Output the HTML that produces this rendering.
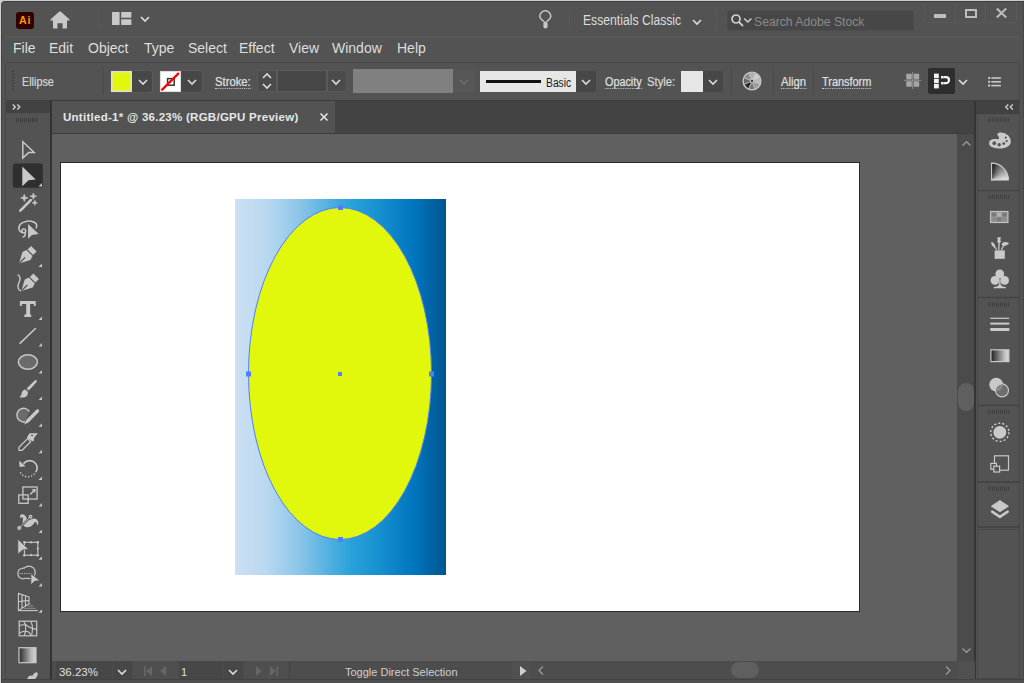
<!DOCTYPE html>
<html><head><meta charset="utf-8">
<style>
html,body{margin:0;padding:0;}
body{width:1024px;height:683px;overflow:hidden;position:relative;background:#cfd1d3;font-family:"Liberation Sans",sans-serif;}
.a{position:absolute;}
#win{position:absolute;left:1px;top:1px;width:1023px;height:682px;background:#535353;border-top:1px solid #3e3e3e;border-left:1px solid #444;border-top-left-radius:4px;box-sizing:border-box;}
.t{position:absolute;white-space:nowrap;color:#dedede;transform-origin:0 0;line-height:1;}
.m{font-size:14px;top:40.6px;color:#dedede;}
.c{font-size:12px;top:77px;line-height:11px;color:#e0e0e0;transform:scaleX(.94);-webkit-text-stroke:0.2px #e0e0e0;}
.u{border-bottom:1px dotted #d0d0d0;padding-bottom:0;line-height:11px;height:11px;}
.vs{position:absolute;width:1px;background:#4a4a4a;}
svg{position:absolute;overflow:visible;}
.dd{position:absolute;background:#474747;border-radius:2px;}
.chev{fill:none;stroke:#dcdcdc;stroke-width:1.6;}
.ic{fill:#c8c8c8;}
.ics{fill:none;stroke:#c8c8c8;stroke-width:1.5;}
.tri{position:absolute;width:0;height:0;border-left:4px solid transparent;border-bottom:4px solid #c8c8c8;}
</style></head>
<body>
<div class="a" style="left:0;top:0;width:1024px;height:1px;background:#c9ccd0"></div>
<div id="win"></div>

<!-- ===== TITLE BAR ===== -->
<div class="a" style="left:16px;top:11.5px;width:17.5px;height:17px;background:#330000;border-radius:3px;"></div>
<div class="t" style="left:19px;top:14.5px;font-size:10.5px;font-weight:700;color:#ff9a00;letter-spacing:0.9px;">Ai</div>
<svg style="left:49.5px;top:11px" width="20" height="18" viewBox="0 0 20 18"><path class="ic" d="M10 0.3 C10.3 0.3 10.6 0.5 10.9 0.8 L19.3 8.2 C19.9 8.8 19.6 9.6 18.8 9.6 L17 9.6 L17 17.6 L12.6 17.6 L12.6 12.2 L7.4 12.2 L7.4 17.6 L3 17.6 L3 9.6 L1.2 9.6 C0.4 9.6 0.1 8.8 0.7 8.2 L9.1 0.8 C9.4 0.5 9.7 0.3 10 0.3 Z"/></svg>
<div class="vs" style="left:98px;top:9px;height:21px;background:#5a5a5a"></div>
<svg style="left:112px;top:11.5px" width="20" height="13" viewBox="0 0 20 13"><rect class="ic" x="0" y="0" width="7.6" height="13" rx="0.6"/><rect class="ic" x="9.2" y="0" width="10.2" height="5.8" rx="0.6"/><rect class="ic" x="9.2" y="7.2" width="10.2" height="5.8" rx="0.6"/></svg>
<svg style="left:140px;top:16px" width="10" height="6" viewBox="0 0 10 6"><path class="chev" d="M1 1 L5 5 L9 1"/></svg>

<svg style="left:538px;top:10px" width="15" height="19" viewBox="0 0 15 19"><path d="M7.3 12.9 C5.5 11 1.8 9.2 1.8 6.3 A5.5 5.5 0 0 1 12.8 6.3 C12.8 9.2 9.1 11 7.3 12.9 Z" fill="none" stroke="#c8c8c8" stroke-width="1.5" stroke-linejoin="round"/><path d="M5.4 13 H9.6 V16.6 C9.6 17.8 8.6 18.5 7.5 18.5 C6.4 18.5 5.4 17.8 5.4 16.6 Z" fill="#c8c8c8"/></svg>
<div class="vs" style="left:569px;top:9px;height:22px;background:#5a5a5a"></div>
<div class="t" style="left:583px;top:13px;font-size:14px;color:#dcdcdc;transform:scaleX(.87)">Essentials Classic</div>
<svg style="left:692px;top:19px" width="10" height="6" viewBox="0 0 10 6"><path class="chev" d="M1 1 L5 5 L9 1"/></svg>
<div class="vs" style="left:716px;top:9px;height:22px;background:#5a5a5a"></div>
<div class="a" style="left:727px;top:10px;width:187px;height:21px;background:#474747;border:1px solid #4c4c4c;border-radius:3px;box-sizing:border-box"></div>
<svg style="left:731px;top:14px" width="26" height="13" viewBox="0 0 26 13"><circle cx="5" cy="5" r="4" fill="none" stroke="#cfcfcf" stroke-width="1.7"/><path d="M7.8 7.8 L12 12" stroke="#cfcfcf" stroke-width="1.8"/><path class="chev" d="M13.2 4.5 L16.8 8 L20.4 4.5" style="stroke:#cfcfcf"/></svg>
<div class="t" style="left:754px;top:15.6px;font-size:12.5px;color:#8a8a8a;transform:scaleX(.975)">Search Adobe Stock</div>
<div class="a" style="left:924px;top:2px;width:93px;height:21px;border:1px solid #5a5a5a;border-top:none;border-radius:0 0 3px 3px;box-sizing:border-box"></div>
<div class="vs" style="left:955px;top:2px;height:20px;background:#5a5a5a"></div>
<div class="vs" style="left:985px;top:2px;height:20px;background:#5a5a5a"></div>
<div class="a" style="left:934px;top:14px;width:12px;height:4px;background:#bdbdbd"></div>
<div class="a" style="left:965px;top:9px;width:12px;height:9px;border:2px solid #bdbdbd;box-sizing:border-box"></div>
<svg style="left:996px;top:8px" width="11" height="10" viewBox="0 0 11 10"><path d="M0.8 0.5 L10.2 9.5 M10.2 0.5 L0.8 9.5" stroke="#bdbdbd" stroke-width="2"/></svg>

<div class="a" style="left:5px;top:36px;width:1015px;height:2px;background:#585858;border-radius:1px"></div>

<!-- ===== MENU ===== -->
<div class="t m" style="left:13px">File</div>
<div class="t m" style="left:49px">Edit</div>
<div class="t m" style="left:88px">Object</div>
<div class="t m" style="left:144px">Type</div>
<div class="t m" style="left:188px">Select</div>
<div class="t m" style="left:239px">Effect</div>
<div class="t m" style="left:289px">View</div>
<div class="t m" style="left:332px">Window</div>
<div class="t m" style="left:397px">Help</div>

<!-- ===== CONTROL BAR ===== -->
<div class="a" style="left:5px;top:62px;width:1015px;height:39px;border:1px solid #474747;border-radius:3px;box-sizing:border-box"></div>

<!-- control bar contents -->
<div class="a" style="left:12px;top:71px;width:2px;height:21px;background:repeating-linear-gradient(to bottom,#3a3a3a 0 1px,transparent 1px 3px)"></div>
<div class="t c" style="left:22px;top:77px;color:#d0d0d0;transform:scaleX(.9)">Ellipse</div>
<div class="vs" style="left:103px;top:67px;height:28px;background:#4a4a4a"></div>
<div class="a" style="left:110px;top:70px;width:43px;height:23px;background:#5a5a5a;border-radius:3px"></div>
<div class="dd" style="left:111px;top:71px;width:41px;height:21px;"></div>
<div class="a" style="left:111px;top:71px;width:21px;height:21px;background:#e1f80c;border:1px solid #dedede;box-shadow:inset 0 0 0 1px rgba(222,222,222,0.55);box-sizing:border-box"></div>
<svg style="left:138px;top:78.5px" width="10" height="6" viewBox="0 0 10 6"><path class="chev" d="M1 1 L5 5 L9 1"/></svg>
<div class="a" style="left:159px;top:70px;width:44px;height:23px;background:#5a5a5a;border-radius:3px"></div>
<div class="dd" style="left:160px;top:71px;width:42px;height:21px;"></div>
<div class="a" style="left:160px;top:71px;width:21px;height:21px;background:#fff;border:1px solid #dcdcdc;box-sizing:border-box"></div>
<svg style="left:160px;top:71px" width="21" height="21" viewBox="0 0 21 21"><rect x="7.6" y="7.6" width="6.6" height="6.6" fill="none" stroke="#383838" stroke-width="1.5"/></svg>
<svg style="left:160px;top:71px" width="21" height="21" viewBox="0 0 21 21"><path d="M2.2 18.6 L18.3 2.6" stroke="#f00" stroke-width="2.3" stroke-linecap="round"/></svg>
<svg style="left:187px;top:79px" width="10" height="6" viewBox="0 0 10 6"><path class="chev" d="M1 1 L5 5 L9 1"/></svg>
<div class="t c u" style="left:215px;top:77px">Stroke:</div>
<div class="a" style="left:257px;top:70px;width:90px;height:22px;background:#5a5a5a;border-radius:3px;"></div>
<div class="a" style="left:258px;top:71px;width:18px;height:20px;background:#4b4b4b;border-radius:2px 0 0 2px"></div>
<svg style="left:262px;top:73px" width="10" height="16" viewBox="0 0 10 16"><path class="chev" d="M1 5 L5 1 L9 5 M1 11 L5 15 L9 11"/></svg>
<div class="a" style="left:278px;top:71px;width:48px;height:20px;background:#474747"></div>
<div class="a" style="left:328px;top:71px;width:18px;height:20px;background:#4b4b4b;border-radius:0 2px 2px 0"></div>
<svg style="left:331px;top:79px" width="10" height="6" viewBox="0 0 10 6"><path class="chev" d="M1 1 L5 5 L9 1"/></svg>
<div class="a" style="left:353px;top:69px;width:100px;height:24px;background:#808080"></div>
<div class="a" style="left:453px;top:69px;width:22px;height:24px;background:#575757"></div>
<svg style="left:459px;top:79px" width="10" height="6" viewBox="0 0 10 6"><path class="chev" d="M1 1 L5 5 L9 1" style="stroke:#6c6c6c"/></svg>
<div class="dd" style="left:480px;top:71px;width:116px;height:21px;"></div>
<div class="a" style="left:480px;top:71px;width:96px;height:21px;background:#e6e6e6"></div>
<div class="a" style="left:486px;top:80px;width:55px;height:3px;background:#111"></div>
<div class="t" style="left:546px;top:77px;font-size:12px;color:#1a1a1a;transform:scaleX(.86)">Basic</div>
<svg style="left:581px;top:79px" width="10" height="6" viewBox="0 0 10 6"><path class="chev" d="M1 1 L5 5 L9 1"/></svg>
<div class="t c u" style="left:605px;top:77px;transform:scaleX(.9)">Opacity</div>
<div class="t c" style="left:647px;top:77px;color:#cfcfcf">Style:</div>
<div class="dd" style="left:681px;top:71px;width:42px;height:21px;"></div>
<div class="a" style="left:681px;top:71px;width:22px;height:21px;background:#e6e6e6"></div>
<svg style="left:708px;top:79px" width="10" height="6" viewBox="0 0 10 6"><path class="chev" d="M1 1 L5 5 L9 1"/></svg>
<div class="vs" style="left:731px;top:67px;height:28px"></div>
<svg style="left:742px;top:71px" width="20" height="20" viewBox="0 0 20 20"><g transform="translate(10 10)"><path d="M0 0 L-3.18 -7.67 A8.3 8.3 0 0 1 3.18 -7.67Z" fill="#b0b0b0"/><path d="M0 0 L3.18 -7.67 A8.3 8.3 0 0 1 7.67 -3.18Z" fill="#cdcdcd"/><path d="M0 0 L7.67 -3.18 A8.3 8.3 0 0 1 7.67 3.18Z" fill="#b8b8b8"/><path d="M0 0 L7.67 3.18 A8.3 8.3 0 0 1 3.18 7.67Z" fill="#999"/><path d="M0 0 L3.18 7.67 A8.3 8.3 0 0 1 -3.18 7.67Z" fill="#777"/><path d="M0 0 L-3.18 7.67 A8.3 8.3 0 0 1 -7.67 3.18Z" fill="#2a2a2a"/><path d="M0 0 L-7.67 3.18 A8.3 8.3 0 0 1 -7.67 -3.18Z" fill="#666"/><path d="M0 0 L-7.67 -3.18 A8.3 8.3 0 0 1 -3.18 -7.67Z" fill="#8a8a8a"/><path d="M-0.99 -2.40 L-3.25 -7.85" stroke="#c8c8c8" stroke-width="0.9"/><path d="M0.99 -2.40 L3.25 -7.85" stroke="#c8c8c8" stroke-width="0.9"/><path d="M2.40 -0.99 L7.85 -3.25" stroke="#c8c8c8" stroke-width="0.9"/><path d="M2.40 0.99 L7.85 3.25" stroke="#c8c8c8" stroke-width="0.9"/><path d="M0.99 2.40 L3.25 7.85" stroke="#c8c8c8" stroke-width="0.9"/><path d="M-0.99 2.40 L-3.25 7.85" stroke="#c8c8c8" stroke-width="0.9"/><path d="M-2.40 0.99 L-7.85 3.25" stroke="#c8c8c8" stroke-width="0.9"/><path d="M-2.40 -0.99 L-7.85 -3.25" stroke="#c8c8c8" stroke-width="0.9"/><circle r="8.9" fill="none" stroke="#c8c8c8" stroke-width="1.4"/><circle r="2.4" fill="#c8c8c8"/><circle r="1.3" fill="#444"/></g></svg>
<div class="vs" style="left:773px;top:67px;height:28px"></div>
<div class="t c u" style="left:781px;top:77px">Align</div>
<div class="vs" style="left:813px;top:67px;height:28px"></div>
<div class="t c u" style="left:822px;top:77px;transform:scaleX(.91)">Transform</div>
<svg style="left:904px;top:72px" width="18" height="18" viewBox="0 0 18 18"><g fill="#a6a6a6"><rect x="2.2" y="1.8" width="5.6" height="5.6" rx="0.8"/><rect x="9.6" y="1.8" width="5.6" height="5.6" rx="0.8"/><rect x="2.2" y="9.2" width="5.6" height="5.6" rx="0.8"/><rect x="9.6" y="9.2" width="5.6" height="5.6" rx="0.8"/></g><path d="M8.7 0 V17 M0 8.3 H17" stroke="#a0a0a0" stroke-width="0.8"/></svg>
<div class="a" style="left:928px;top:68px;width:27px;height:26px;background:#2e2e2e;border-radius:2px"></div>
<svg style="left:934px;top:73px" width="17" height="16" viewBox="0 0 17 16"><g fill="#f2f2f2"><rect x="0" y="0.6" width="4.8" height="4.4"/><rect x="0" y="5.8" width="4.8" height="4.4"/><rect x="0" y="11" width="4.8" height="4.4"/><rect x="7" y="3" width="2.6" height="2.4"/><rect x="7" y="9" width="2.6" height="2.4"/></g><path d="M9.6 4.2 H12 A3 3 0 0 1 12 10.2 H9.6" fill="none" stroke="#f2f2f2" stroke-width="2.2"/></svg>
<svg style="left:958px;top:79px" width="10" height="6" viewBox="0 0 10 6"><path class="chev" d="M1 1 L5 5 L9 1"/></svg>
<svg style="left:988px;top:77px" width="13" height="10" viewBox="0 0 13 10"><g fill="#c8c8c8"><rect x="0" y="0" width="2.2" height="2" rx="0.5"/><rect x="0" y="3.8" width="2.2" height="2" rx="0.5"/><rect x="0" y="7.6" width="2.2" height="2" rx="0.5"/><rect x="3.3" y="0.2" width="9.6" height="1.6"/><rect x="3.3" y="4" width="9.6" height="1.6"/><rect x="3.3" y="7.8" width="9.6" height="1.6"/></g></svg>


<!-- ===== LEFT TOOLBAR ===== -->
<div class="a" style="left:5px;top:100px;width:46px;height:583px;background:#535353;border-left:1px solid #474747;box-sizing:border-box"></div>
<div class="a" style="left:6px;top:100px;width:44px;height:13px;background:#424242"></div>
<svg style="left:12px;top:104px" width="9" height="6" viewBox="0 0 9 6"><path d="M0.8 0.5 L3.3 3 L0.8 5.5 M5.3 0.5 L7.8 3 L5.3 5.5" fill="none" stroke="#cfcfcf" stroke-width="1.4"/></svg>
<div class="a" style="left:16px;top:118px;width:22px;height:4px;background:repeating-linear-gradient(to right,#3c3c3c 0 1px,transparent 1px 2px)"></div>
<div class="a" style="left:50px;top:100px;width:2px;height:579px;background:#333"></div>

<!-- ===== TAB BAR / CANVAS ===== -->
<div class="a" style="left:52px;top:100px;width:923px;height:33px;background:#434343"></div>
<div class="a" style="left:52px;top:101px;width:283px;height:32px;background:#535353"></div>
<div class="t" style="left:63px;top:111.5px;font-size:11.5px;font-weight:700;color:#e6e6e6;letter-spacing:0.27px">Untitled-1* @ 36.23% (RGB/GPU Preview)</div>
<svg style="left:320px;top:113px" width="8" height="8" viewBox="0 0 8 8"><path d="M0.5 0.5 L7.5 7.5 M7.5 0.5 L0.5 7.5" stroke="#e6e6e6" stroke-width="1.5"/></svg>
<div class="a" style="left:52px;top:133px;width:923px;height:1px;background:#3c3c3c"></div>
<div class="a" style="left:52px;top:134px;width:905px;height:527px;background:#606060"></div>
<div class="a" style="left:957px;top:134px;width:17px;height:527px;background:#4b4b4b"></div>
<svg style="left:962px;top:141px" width="9" height="5" viewBox="0 0 9 5"><path d="M0.5 4.5 L4.5 0.7 L8.5 4.5" fill="none" stroke="#9a9a9a" stroke-width="1.3"/></svg>
<svg style="left:962px;top:648px" width="9" height="5" viewBox="0 0 9 5"><path d="M0.5 0.5 L4.5 4.3 L8.5 0.5" fill="none" stroke="#9a9a9a" stroke-width="1.3"/></svg>
<div class="a" style="left:958px;top:383px;width:16px;height:28px;background:#5f5f5f;border-radius:8px"></div>
<div class="a" style="left:974px;top:100px;width:2px;height:579px;background:#353535"></div>

<!-- ===== STATUS BAR ===== -->
<div class="a" style="left:52px;top:661px;width:905px;height:18px;background:#4d4d4d"></div>
<div class="a" style="left:957px;top:661px;width:18px;height:18px;background:#505050"></div>
<div class="a" style="left:56px;top:661px;width:76px;height:18px;background:#474747;border-radius:3px 3px 0 0"></div>
<div class="a" style="left:112px;top:662px;width:1px;height:17px;background:#4d4d4d"></div>
<div class="t" style="left:59px;top:667px;font-size:11px;color:#e0e0e0;transform:scaleX(1.04)">36.23%</div>
<svg style="left:117px;top:669px" width="10" height="6" viewBox="0 0 10 6"><path class="chev" d="M1 1 L5 5 L9 1"/></svg>
<div class="a" style="left:133px;top:661px;width:45px;height:18px;background:#4f4f4f;border-radius:3px 3px 0 0"></div>
<div class="a" style="left:179px;top:661px;width:64px;height:18px;background:#474747;border-radius:3px 3px 0 0"></div>
<div class="a" style="left:223px;top:662px;width:1px;height:17px;background:#4d4d4d"></div>
<div class="t" style="left:181px;top:667px;font-size:11px;color:#e0e0e0">1</div>
<svg style="left:228px;top:669px" width="10" height="6" viewBox="0 0 10 6"><path class="chev" d="M1 1 L5 5 L9 1"/></svg>
<div class="a" style="left:244px;top:661px;width:44px;height:18px;background:#4f4f4f;border-radius:3px 3px 0 0"></div>
<svg style="left:144px;top:666px" width="24" height="10" viewBox="0 0 24 10"><rect x="0" y="0" width="1.6" height="10" fill="#666"/><path d="M2 5 L8 0 V10Z M16 5 L22 0 V10Z" fill="#666"/></svg>
<svg style="left:256px;top:666px" width="24" height="10" viewBox="0 0 24 10"><path d="M0 0 L6 5 L0 10Z M14 0 L20 5 L14 10Z" fill="#666"/><rect x="20.5" y="0" width="1.6" height="10" fill="#666"/></svg>
<div class="a" style="left:289px;top:662px;width:1px;height:17px;background:#444"></div>
<div class="t" style="left:345px;top:667px;font-size:11px;color:#d0d0d0">Toggle Direct Selection</div>
<div class="a" style="left:512px;top:662px;width:19px;height:17px;background:#505050"></div>
<svg style="left:520px;top:666px" width="7" height="10" viewBox="0 0 7 10"><path d="M0 0 L6.5 5 L0 10Z" fill="#cfcfcf"/></svg>
<svg style="left:538px;top:666px" width="6" height="9" viewBox="0 0 6 9"><path d="M5 0.5 L1 4.5 L5 8.5" fill="none" stroke="#9a9a9a" stroke-width="1.3"/></svg>
<div class="a" style="left:731px;top:662px;width:28px;height:16px;background:#5f5f5f;border-radius:8px"></div>
<svg style="left:945px;top:666px" width="6" height="9" viewBox="0 0 6 9"><path d="M1 0.5 L5 4.5 L1 8.5" fill="none" stroke="#9a9a9a" stroke-width="1.3"/></svg>

<!-- ===== RIGHT PANEL ===== -->
<div class="a" style="left:976px;top:100px;width:44px;height:583px;background:#535353"></div>
<div class="a" style="left:976px;top:100px;width:44px;height:13px;background:#424242"></div>
<svg style="left:1005px;top:104px" width="9" height="6" viewBox="0 0 9 6"><path d="M3.3 0.5 L0.8 3 L3.3 5.5 M7.8 0.5 L5.3 3 L7.8 5.5" fill="none" stroke="#cfcfcf" stroke-width="1.4"/></svg>
<div class="a" style="left:1019px;top:100px;width:1px;height:583px;background:#474747"></div>
<div class="a" style="left:1023px;top:2px;width:1px;height:681px;background:#474747"></div>

<!-- ===== ARTBOARD ===== -->
<div class="a" style="left:60px;top:162px;width:800px;height:450px;background:#fff;border:1px solid #2a2a2a;box-sizing:border-box"></div>
<div class="a" style="left:235px;top:199px;width:211px;height:376px;background:linear-gradient(to right,#cde0f3 0%,#b9d8f0 15%,#8ec6e8 30%,#4fb0e0 45%,#29a2da 55%,#1790d0 68%,#0075be 85%,#00558f 100%)"></div>
<svg style="left:0;top:0" width="1024" height="683" viewBox="0 0 1024 683">
<ellipse cx="340" cy="373.5" rx="91.5" ry="166" fill="#e1f80c" stroke="#4f7fff" stroke-width="1"/>
<rect x="338" y="205" width="5" height="5" fill="#4f7fff"/>
<rect x="338" y="537" width="5" height="5" fill="#4f7fff"/>
<rect x="246" y="371.5" width="5" height="5" fill="#4f7fff"/>
<rect x="429" y="371.5" width="5" height="5" fill="#4f7fff"/>
<rect x="338" y="372" width="4" height="4" fill="#4f7fff"/>
</svg>


<!-- ===== TOOL ICONS ===== -->
<svg style="left:0;top:0" width="52" height="683" viewBox="0 0 52 683">
<defs><linearGradient id="gt" x1="0" x2="1"><stop offset="0" stop-color="#2a2a2a"/><stop offset="0.75" stop-color="#bdbdbd"/><stop offset="1" stop-color="#d0d0d0"/></linearGradient></defs>
<g fill="#c8c8c8">
<path d="M38.5 186.6 L42 186.6 L42 183.1Z M38.5 267 L42 267 L42 263.5Z M38.5 320.1 L42 320.1 L42 316.6Z M38.5 346.6 L42 346.6 L42 343.1Z M38.5 373.6 L42 373.6 L42 370.1Z M38.5 400 L42 400 L42 396.5Z M38.5 426.8 L42 426.8 L42 423.3Z M38.5 453.2 L42 453.2 L42 449.7Z M38.5 479.9 L42 479.9 L42 476.4Z M38.5 506.4 L42 506.4 L42 502.9Z M38.5 533.1 L42 533.1 L42 529.6Z M38.5 559.8 L42 559.8 L42 556.3Z M38.5 586.5 L42 586.5 L42 583Z M38.5 612.8 L42 612.8 L42 609.3Z"/>
</g>
<!-- selection -->
<path d="M22.8 141.8 L34.2 152.5 L28.6 152.6 L22.8 158 Z" fill="none" stroke="#c8c8c8" stroke-width="1.5" stroke-linejoin="miter"/>
<!-- direct selection active -->
<rect x="12.8" y="163.5" width="30" height="24.3" rx="2.5" fill="#2f2f2f"/>
<path d="M38.5 186.6 L42 186.6 L42 183.1Z" fill="#c8c8c8"/>
<path d="M22.3 166.5 L35.7 179.5 L28.6 180.3 L22.3 186.2 Z" fill="#c8c8c8"/>
<!-- magic wand -->
<path d="M20.3 210.7 L30.8 200.2" stroke="#c8c8c8" stroke-width="2.6" stroke-linecap="round"/>
<path d="M24.3 194.3 Q24.3 197.9 27.9 197.9 Q24.3 197.9 24.3 201.5 Q24.3 197.9 20.7 197.9 Q24.3 197.9 24.3 194.3Z M33.3 193 Q33.3 196.2 36.5 196.2 Q33.3 196.2 33.3 199.4 Q33.3 196.2 30.1 196.2 Q33.3 196.2 33.3 193Z M34.8 200.3 Q34.8 202.8 37.3 202.8 Q34.8 202.8 34.8 205.3 Q34.8 202.8 32.3 202.8 Q34.8 202.8 34.8 200.3Z" fill="#c8c8c8" stroke="#c8c8c8" stroke-width="0.8"/>
<!-- lasso -->
<path d="M19.2 230 C17.8 225.8 21 222 27 221.2 C32 220.7 36.5 222.5 36.7 225.5 C36.8 226.5 36.4 227.6 35.8 228.4" fill="none" stroke="#c8c8c8" stroke-width="1.5"/>
<path d="M19.2 230 C19.8 231.5 21 232.2 22.3 232.4" fill="none" stroke="#c8c8c8" stroke-width="1.5"/>
<circle cx="23.8" cy="230.9" r="1.9" fill="none" stroke="#c8c8c8" stroke-width="1.5"/>
<path d="M25 232.8 C25.6 234.6 24.8 236.6 22.6 237.4" fill="none" stroke="#c8c8c8" stroke-width="1.5"/>
<path d="M28.1 224 L38.7 234.1 L32 235 L28.1 238.8 Z" fill="#c8c8c8"/>
<!-- pen -->
<g transform="translate(19 263.5) rotate(45)" fill="#c8c8c8">
<path d="M0 0 L-5.6 -10.5 L-4.3 -14.8 L4.3 -14.8 L5.6 -10.5 Z"/>
<rect x="-3.9" y="-21" width="7.8" height="5"/>
<path d="M0 -0.5 V-8.5" stroke="#535353" stroke-width="1.3"/>
</g>
<!-- curvature -->
<g transform="translate(21.3 291) rotate(45)" fill="#c8c8c8">
<path d="M0 0 L-5.6 -10.5 L-4.3 -14.8 L4.3 -14.8 L5.6 -10.5 Z"/>
<rect x="-3.9" y="-21" width="7.8" height="5"/>
<path d="M0 -0.5 V-8.5" stroke="#535353" stroke-width="1.3"/>
</g>
<path d="M17.6 274.6 C20.5 276 20.6 279.5 19 282.5 C17.2 286 17.5 290 21 291" fill="none" stroke="#c8c8c8" stroke-width="1.4"/>
<!-- type -->
<path d="M19.9 301.1 H35.7 V305.9 H33.8 V303.9 H30.1 V314.6 H31.2 V317 H24.3 V314.6 H26.2 V303.9 H21.8 V305.9 H19.9 Z" fill="#c8c8c8"/>
<!-- line -->
<path d="M20 343.3 L35.4 328.5" stroke="#c8c8c8" stroke-width="1.6" stroke-linecap="round"/>
<!-- ellipse -->
<ellipse cx="27.9" cy="362" rx="9.5" ry="7.2" fill="#6b6b6b" stroke="#c8c8c8" stroke-width="1.5"/>
<!-- brush -->
<path d="M36.6 380.2 C37.2 380.9 36.8 382 35.8 383 L28.8 390.6 L26.6 388.5 L34.2 381 C35.2 380.1 36 379.6 36.6 380.2Z" fill="#c8c8c8"/>
<path d="M27.8 391.8 C28.5 394.5 26.5 397.6 23 397.6 C21.2 397.6 19.5 397.4 19.2 397 C20.8 396.4 21.2 395.2 21.5 393.8 C22 391 24 389.6 25.6 389.6 Z" fill="#c8c8c8"/>
<!-- shaper -->
<path d="M29.5 411.5 A6.8 6.8 0 1 0 25 421.8" fill="#6b6b6b" stroke="#c8c8c8" stroke-width="1.4"/>
<path d="M38.6 409.6 C39.6 410.6 39.3 411.6 38.4 412.5 L28.8 422.2 L24.2 424.4 L26.4 419.8 L36 410.1 C36.9 409.2 37.8 408.9 38.6 409.6Z" fill="#c8c8c8"/>
<!-- eyedropper -->
<path d="M27.6 438.6 L19 447.2 L19 450.3 L22.1 450.3 L30.7 441.7 Z" fill="none" stroke="#c8c8c8" stroke-width="1.25" stroke-linejoin="round"/>
<path d="M26.8 437.8 L28.2 435.2 L29.6 433.2 L37.9 433.3 L34.3 437.4 L33.6 441.5 L31.6 440.7 Z" fill="#c8c8c8"/>
<ellipse cx="32" cy="435.5" rx="1.1" ry="0.8" fill="#535353"/>
<!-- rotate -->
<path d="M23.5 463.6 C26.5 459.9 32 459.5 35.2 463 C37.6 465.6 37.7 469.6 35.7 472.2" fill="none" stroke="#c8c8c8" stroke-width="1.7"/>
<path d="M19.2 460.8 L19.6 467 L25.6 466.2 Z" fill="#c8c8c8"/>
<path d="M34.6 473.6 C31.5 477.5 25.5 477.8 22 474.5 C21 473.6 20.2 472.4 19.7 471" fill="none" stroke="#c8c8c8" stroke-width="1.5" stroke-dasharray="1.3 1.8"/>
<!-- scale -->
<rect x="22.9" y="487" width="14.2" height="12" fill="none" stroke="#c8c8c8" stroke-width="1.3"/>
<rect x="18.8" y="494.9" width="9.3" height="8.4" fill="none" stroke="#c8c8c8" stroke-width="1.3"/>
<path d="M30.2 494.4 L35.2 489.5" stroke="#c8c8c8" stroke-width="1.4"/>
<path d="M35.6 489 L31.6 489.3 L35.3 493 Z" fill="#c8c8c8"/>
<!-- puppet warp -->
<path d="M22.1 514.3 C20.3 514.3 19.6 516.2 20.3 518.2 C20.8 517.1 21.8 516.8 22.6 517.6 C23.8 519 22.3 521.5 22.6 523.5 C23 526 25 527.5 28 527.3 C31 527 33 525 34.5 522.5 C35.5 521.5 36.8 522.5 37 524 C37.2 525 37.8 525.2 38.2 524.5 C38.8 522 37.6 519.2 35.2 518.7 C32.8 518.2 30.5 519.8 28.5 520.5 C27.5 520.8 27.2 519.5 26.8 518.5 C26 516 24.3 514.3 22.1 514.3 Z" fill="#c8c8c8"/>
<path d="M20.5 526.9 L29.3 517.9" stroke="#535353" stroke-width="2.1"/>
<path d="M19.3 528.1 L30.5 516.7" stroke="#c8c8c8" stroke-width="0.9"/>
<circle cx="19.3" cy="528.1" r="2" fill="#c8c8c8"/><circle cx="19.3" cy="528.1" r="0.7" fill="#6a6a6a"/>
<circle cx="30.5" cy="516.7" r="1.9" fill="#c8c8c8"/><circle cx="30.5" cy="516.7" r="0.7" fill="#6a6a6a"/>
<!-- free transform -->
<rect x="24.4" y="542.3" width="13.4" height="12.9" fill="none" stroke="#c8c8c8" stroke-width="1.1"/>
<g fill="#c8c8c8"><circle cx="24.4" cy="542.3" r="1.2"/><circle cx="31.1" cy="542.3" r="1.1"/><circle cx="37.8" cy="542.3" r="1.2"/><circle cx="37.8" cy="548.7" r="1.1"/><circle cx="37.8" cy="555.2" r="1.2"/><circle cx="31.1" cy="555.2" r="1.1"/><circle cx="24.4" cy="555.2" r="1.2"/></g>
<path d="M17.9 539.2 L28.4 549.2 L23 549.8 L17.9 554 Z" fill="#c8c8c8" stroke="#535353" stroke-width="0.6"/>
<!-- shape builder -->
<circle cx="23.2" cy="573.5" r="6" fill="#c8c8c8"/>
<circle cx="28.9" cy="572.4" r="6.9" fill="#c8c8c8"/>
<circle cx="23.2" cy="573.5" r="4.8" fill="#535353"/>
<circle cx="28.9" cy="572.4" r="5.7" fill="#535353"/>
<path d="M19.6 573.5 H33.5" stroke="#c8c8c8" stroke-width="1.1" stroke-dasharray="1 1.3"/>
<path d="M30.8 573.4 L40.2 580.8 L35 581.2 L30.8 585 Z" fill="#c8c8c8" stroke="#535353" stroke-width="1"/>
<!-- perspective grid -->
<path d="M18.4 593.3 V610.6 L29 603.8 V597 Z M18.4 601.8 L29 600.4 M22 594.5 V608.3 M25.5 595.7 V606" fill="none" stroke="#c8c8c8" stroke-width="1.1" stroke-linejoin="round"/>
<path d="M18.4 610.6 H37.8" stroke="#c8c8c8" stroke-width="1.1"/>
<path d="M24 608.3 H36 M27.5 606 H33.5 M29 603.8 H31" stroke="#8e8e8e" stroke-width="1"/>
<!-- mesh -->
<rect x="19.2" y="621.2" width="17.5" height="14.6" fill="none" stroke="#c8c8c8" stroke-width="1.2"/>
<path d="M23.7 621.2 C24.5 624 27 626.5 32.5 628.6 L36.7 629.1 M19.2 625.7 C21 625 23.5 624.5 25.4 625 M25.5 625 C26 628 26 632 24.4 635.8 M19.2 633.6 C22 631 26.5 630.5 28.9 632.2 C30 633 30.6 634.5 30.8 635.8 M30.8 621.2 C32.2 624 32.8 627 32.5 629 C32.2 631.5 31.8 634 31.8 635.8" fill="none" stroke="#c8c8c8" stroke-width="1.1"/>
<!-- gradient -->
<rect x="19" y="647.7" width="17" height="15" fill="url(#gt)" stroke="#c8c8c8" stroke-width="1.2"/>
<!-- partial -->
<path d="M26.6 679.5 L28.8 676.3 C29.6 675.3 31 675.3 32 675.9 L34.6 673 C35.9 671.7 38 672.3 37.8 674.2 C37.6 676 36.2 677.9 34.6 679.5 Z" fill="#c8c8c8"/>
</svg>


<!-- ===== RIGHT PANEL ICONS ===== -->
<svg style="left:0;top:0" width="1024" height="683" viewBox="0 0 1024 683">
<defs>
<linearGradient id="gr2" x1="0" x2="1"><stop offset="0" stop-color="#1e1e1e"/><stop offset="0.8" stop-color="#c8c8c8"/><stop offset="1" stop-color="#d8d8d8"/></linearGradient>
<pattern id="grip" width="2" height="4" patternUnits="userSpaceOnUse"><rect x="0" y="0" width="1" height="4" fill="#404040"/></pattern>
</defs>
<!-- panel group borders -->
<path d="M977.5 113 V678.5 M1019.5 113 V678.5" stroke="#474747" stroke-width="1"/>
<path d="M977 190.5 H1020 M977 297.5 H1020 M977 405.5 H1020 M977 482 H1020 M977 527 H1020" stroke="#434343" stroke-width="1.3"/>
<rect x="977.5" y="529.5" width="42" height="149" fill="none" stroke="#474747" stroke-width="1"/>
<!-- grips -->
<rect x="987" y="117.6" width="22" height="4.2" fill="url(#grip)"/>
<rect x="987" y="194.8" width="22" height="4.2" fill="url(#grip)"/>
<rect x="987" y="302.5" width="22" height="4.2" fill="url(#grip)"/>
<rect x="987" y="409.8" width="22" height="4.2" fill="url(#grip)"/>
<rect x="987" y="486.6" width="22" height="4.2" fill="url(#grip)"/>
<!-- palette -->
<path d="M1000.5 132.4 C1006.5 132.4 1011 136.8 1010.8 141.4 C1010.6 146.2 1005.5 148.6 999 148.4 C993 148.2 989.1 146.6 989.1 143.2 C989.1 139.8 993 138.6 997 139.2 C999.2 139.5 999.8 137.6 998.3 136.3 C996.6 134.8 997.2 132.4 1000.5 132.4 Z" fill="#cacaca"/>
<g fill="#555"><circle cx="994.3" cy="143.2" r="1.9"/><circle cx="999.2" cy="144.8" r="1.7"/><circle cx="1003.8" cy="143.6" r="1.4"/><circle cx="1006.7" cy="141.1" r="1.1"/><circle cx="1005.8" cy="137.6" r="1.1"/></g>
<!-- color guide -->
<g transform="translate(991.6 180)"><path d="M0 0 L0.00 -16.80 A16.8 16.8 0 0 1 2.92 -16.54Z" fill="#1a1a1a" stroke="#1a1a1a" stroke-width="0.3"/><path d="M0 0 L2.92 -16.54 A16.8 16.8 0 0 1 5.75 -15.79Z" fill="#3f3f3f" stroke="#3f3f3f" stroke-width="0.3"/><path d="M0 0 L5.75 -15.79 A16.8 16.8 0 0 1 8.40 -14.55Z" fill="#5b5b5b" stroke="#5b5b5b" stroke-width="0.3"/><path d="M0 0 L8.40 -14.55 A16.8 16.8 0 0 1 10.80 -12.87Z" fill="#747474" stroke="#747474" stroke-width="0.3"/><path d="M0 0 L10.80 -12.87 A16.8 16.8 0 0 1 12.87 -10.80Z" fill="#8c8c8c" stroke="#8c8c8c" stroke-width="0.3"/><path d="M0 0 L12.87 -10.80 A16.8 16.8 0 0 1 14.55 -8.40Z" fill="#a2a2a2" stroke="#a2a2a2" stroke-width="0.3"/><path d="M0 0 L14.55 -8.40 A16.8 16.8 0 0 1 15.79 -5.75Z" fill="#b8b8b8" stroke="#b8b8b8" stroke-width="0.3"/><path d="M0 0 L15.79 -5.75 A16.8 16.8 0 0 1 16.54 -2.92Z" fill="#cccccc" stroke="#cccccc" stroke-width="0.3"/><path d="M0 0 L16.54 -2.92 A16.8 16.8 0 0 1 16.80 0.00Z" fill="#e1e1e1" stroke="#e1e1e1" stroke-width="0.3"/><path d="M0 0 V-16.8 A16.8 16.8 0 0 1 16.8 0Z" fill="none" stroke="#c8c8c8" stroke-width="1.2"/></g>
<!-- swatches -->
<rect x="990.4" y="211.4" width="17.6" height="11.2" fill="#9a9a9a" stroke="#c8c8c8" stroke-width="1"/>
<g fill="#7a7a7a"><rect x="991.6" y="212.6" width="4.6" height="4"/><rect x="1002.2" y="212.6" width="4.6" height="4"/><rect x="996.9" y="217.4" width="4.6" height="4"/></g>
<g fill="#8c8c8c"><rect x="991.6" y="217.4" width="4.6" height="4"/><rect x="1002.2" y="217.4" width="4.6" height="4"/></g>
<rect x="996.9" y="212.6" width="4.6" height="4" fill="#b0b0b0"/>
<!-- brushes -->
<rect x="994.6" y="250.4" width="10.2" height="8.4" fill="#cacaca"/>
<path d="M996.5 250 L993.6 247 C991.5 245.5 990.8 243.5 991.5 241.8 C993.5 242.5 995 244 995.3 246.5 L997.3 249.8Z" fill="#cacaca"/>
<path d="M998.8 250 L999.2 241.5 M1001.3 250 L1004.5 244" stroke="#cacaca" stroke-width="1.3"/>
<path d="M997.3 237.2 L1000.8 237.2 L1000.3 240.5 C1001.5 241 1001.2 242.8 999.1 242.8 C997 242.8 996.6 241 997.8 240.5Z" fill="#cacaca"/>
<path d="M1001.5 244.5 C1002 242 1005 241.2 1009 243 C1008 245 1006 246 1003 245.8Z" fill="#cacaca"/>
<!-- club -->
<g fill="#cacaca"><circle cx="999.8" cy="273.9" r="4.4"/><circle cx="995" cy="280.4" r="4.4"/><circle cx="1004.6" cy="280.4" r="4.4"/><path d="M999.8 276 L1000.5 284 C1001 286.3 1003 286.9 1005.8 287 V288.2 H993.8 V287 C996.6 286.9 998.6 286.3 999.1 284Z"/></g>
<!-- stroke -->
<rect x="990.3" y="317.7" width="19" height="1.2" fill="#cacaca"/>
<rect x="990.3" y="322.6" width="19" height="2" fill="#cacaca"/>
<rect x="990.3" y="328" width="19" height="3" fill="#cacaca"/>
<!-- gradient -->
<rect x="990.9" y="349.8" width="18" height="11.8" fill="url(#gr2)" stroke="#c8c8c8" stroke-width="1.2"/>
<!-- transparency -->
<circle cx="996.2" cy="384.6" r="6.9" fill="#c8c8c8"/>
<circle cx="1002" cy="390.4" r="6.5" fill="#6e6e6e" stroke="#c8c8c8" stroke-width="1.2"/>
<path d="M996.2 384.6 m6.8 -0 A6.9 6.9 0 0 1 996.5 391.5 A6.5 6.5 0 0 1 1003 384.6Z" fill="#8a8a8a"/>
<!-- appearance -->
<circle cx="999.8" cy="432.3" r="6.4" fill="#cacaca"/>
<circle cx="999.8" cy="432.3" r="9.1" fill="none" stroke="#cacaca" stroke-width="1.4" stroke-dasharray="2.1 2"/>
<!-- artboards -->
<rect x="994.5" y="455.8" width="14" height="14.4" fill="none" stroke="#c8c8c8" stroke-width="1.2"/>
<rect x="990.8" y="463.4" width="5.6" height="5.8" fill="#535353" stroke="#c8c8c8" stroke-width="1.2"/>
<rect x="993.8" y="466.2" width="5.8" height="5.8" fill="#535353" stroke="#c8c8c8" stroke-width="1.2"/>
<!-- layers -->
<path d="M999.9 500.6 L1008.4 506.2 L999.9 511.7 L991.4 506.2 Z" fill="#c8c8c8" stroke="#c8c8c8" stroke-width="1" stroke-linejoin="round"/>
<path d="M992.1 511.6 L999.9 516.9 L1007.7 511.6" fill="none" stroke="#c8c8c8" stroke-width="2.5" stroke-linejoin="round" stroke-linecap="round"/>
</svg>

<!-- overlay lines -->
<div class="a" style="left:2px;top:679px;width:1022px;height:4px;background:#4f4f4f;border-top:1px solid #424242;box-sizing:border-box"></div>
<div class="a" style="left:52px;top:100px;width:968px;height:1px;background:#3c3c3c"></div>
<div class="a" style="left:976px;top:113px;width:44px;height:1px;background:#3e3e3e"></div>
</body></html>
